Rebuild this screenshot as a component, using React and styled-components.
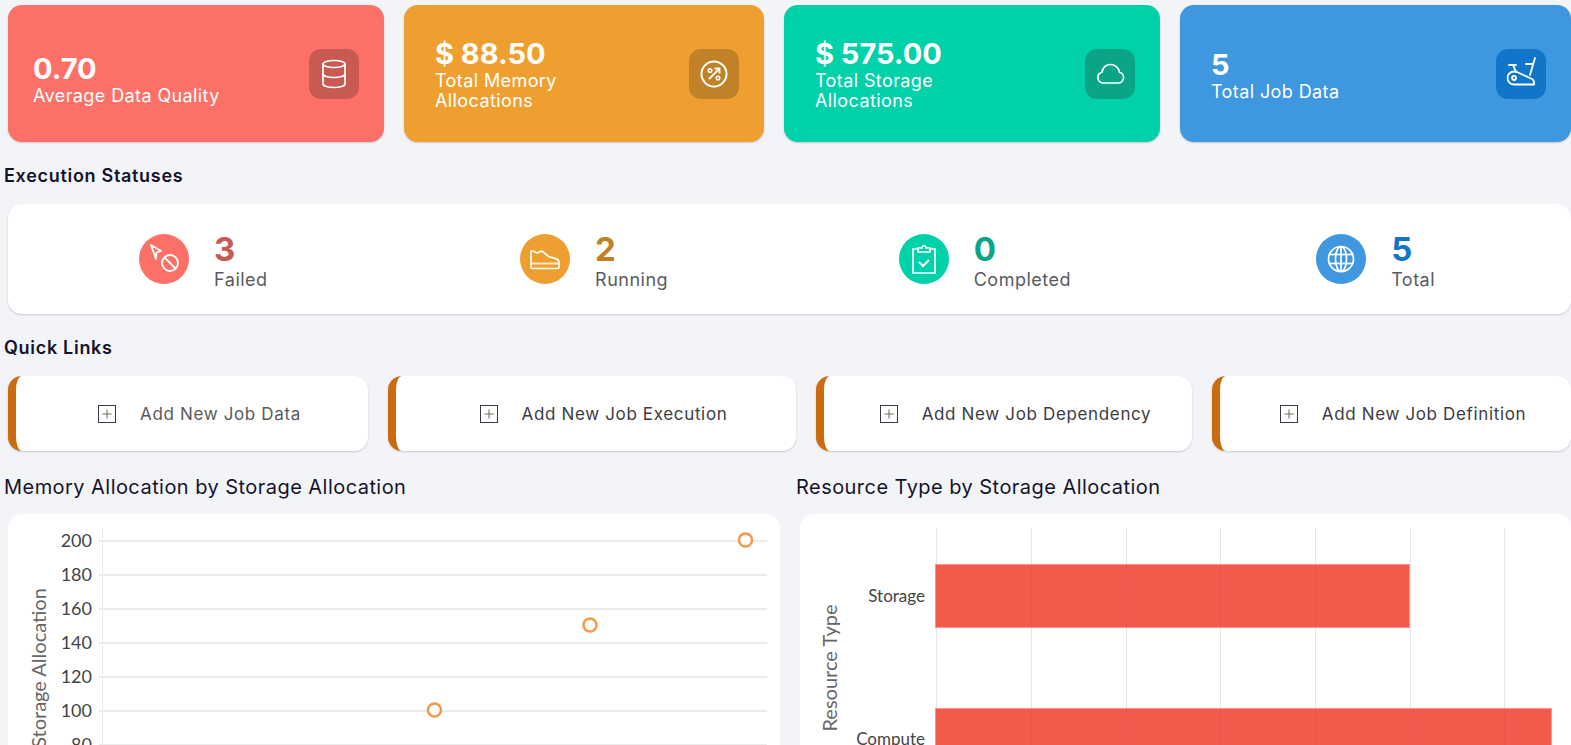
import styled, { createGlobalStyle } from "styled-components";

const GlobalStyle = createGlobalStyle`
  html, body {
    margin: 0;
    height: 745px;
    overflow: hidden;
    background: #f3f4f8;
  }
  * {
    box-sizing: border-box;
  }
`;

const DatabaseIcon = () => (
  <svg width="30" height="30" viewBox="0 0 30 30" fill="none" stroke="#fff" strokeWidth="1.7">
    <ellipse cx="15" cy="5" rx="11" ry="3.500" />
    <path d="M4 5v20c0 2 5 3.500 11 3.500s11-1.500 11-3.500V5" />
    <path d="M4 15c0 2 5 3.500 11 3.500s11-1.500 11-3.500" />
  </svg>
);

const PercentIcon = () => (
  <svg width="30" height="30" viewBox="0 0 30 30" fill="none" stroke="#fff" strokeWidth="2">
    <circle cx="15" cy="15" r="12.500" />
    <path d="M10 20 20 10" strokeWidth="1.800" />
    <path d="M15.500 9.500h5v5" strokeWidth="1.800" />
    <circle cx="11" cy="11.500" r="1.800" strokeWidth="1.500" />
    <circle cx="19" cy="19" r="1.800" strokeWidth="1.500" />
  </svg>
);

const CloudIcon = () => (
  <svg width="30" height="30" viewBox="0 0 30 30" fill="none" stroke="#fff" strokeWidth="1.700">
    <path d="M8 24h15a5.500 5.500 0 0 0 1.500-10.800C24 9 20 5.500 15.500 5.500c-4.500 0-8 3.200-8.500 7.700A5.500 5.500 0 0 0 8 24Z" />
  </svg>
);

const BikeIcon = () => (
  <svg width="34" height="34" viewBox="0 0 34 34" fill="none" stroke="#fff" strokeWidth="1.800" strokeLinecap="round" strokeLinejoin="round">
    <path d="M31 1 26 18" />
    <path d="M22 7h7" />
    <path d="M5 8h7" />
    <path d="M9 8l3 7" />
    <path d="M10 27.500h20c.5-3 0-5-3-6L14 15.500c-1.500-.8-2.800-1-4-1a6.500 6.500 0 0 0 0 13Z" />
    <circle cx="10" cy="21" r="2" />
  </svg>
);

const CursorBlockedIcon = () => (
  <svg width="34" height="34" viewBox="0 0 34 34" fill="none" stroke="#fff" strokeWidth="1.800">
    <path d="M4 3 14 9l-4.500 1.500L9 17 4 3Z" strokeLinejoin="round" />
    <circle cx="23" cy="21" r="8" />
    <path d="M17.500 15.500l11 11" />
  </svg>
);

const ShoeIcon = () => (
  <svg width="32" height="28" viewBox="0 0 32 28" fill="none" stroke="#fff" strokeWidth="1.700" strokeLinejoin="round">
    <path d="M2 6h2l4 2 5-2 6 5c4 2.500 11 2 11 6v5c0 1-.5 1.500-1.500 1.500h-25C2.500 23.500 2 23 2 22V6Z" />
    <path d="M2 18.500h28" strokeOpacity=".75" strokeWidth="2" />
  </svg>
);

const ClipboardIcon = () => (
  <svg width="26" height="30" viewBox="0 0 26 30" fill="none" stroke="#fff" strokeWidth="1.700">
    <path d="M7 5H2v24h22V5h-5" />
    <path d="M7 8V4h4c0-3 4-3 4 0h4v4H7Z" />
    <path d="M8 18l4 4 6-6" strokeWidth="2" />
  </svg>
);

const GlobeIcon = () => (
  <svg width="30" height="30" viewBox="0 0 30 30" fill="none" stroke="#fff" strokeWidth="1.700">
    <circle cx="15" cy="15" r="12.500" />
    <ellipse cx="15" cy="15" rx="5.500" ry="12.500" />
    <path d="M15 2.500v25" />
    <path d="M3 10.500h24" />
    <path d="M3 19.500h24" />
  </svg>
);

const PlusBoxIcon = () => (
  <svg width="18" height="18" viewBox="0 0 18 18" fill="none">
    <rect x=".5" y=".5" width="17" height="17" stroke="#3a3a4a" />
    <path d="M9 4.500v9M4.500 9h9" stroke="#666" />
  </svg>
);

const summaryCards = [
  { value: "0.70", label: "Average Data Quality", bg: "#fd7067", tile: "#c85a52", icon: <DatabaseIcon />, pad: 25, shift: 12 },
  { value: "$ 88.50", label: "Total Memory\nAllocations", bg: "#ef9f30", tile: "#c08127", icon: <PercentIcon />, pad: 31, shift: 2 },
  { value: "$ 575.00", label: "Total Storage\nAllocations", bg: "#00d1a9", tile: "#0aa586", icon: <CloudIcon />, pad: 31, shift: 2 },
  { value: "5", label: "Total Job Data", bg: "#3f97df", tile: "#1176ca", icon: <BikeIcon />, pad: 31, shift: 4 },
];

const statuses = [
  { value: "3", label: "Failed", bg: "#fd7067", color: "#c85a52", icon: <CursorBlockedIcon /> },
  { value: "2", label: "Running", bg: "#ef9f30", color: "#c08127", icon: <ShoeIcon /> },
  { value: "0", label: "Completed", bg: "#00d1a9", color: "#0aa586", icon: <ClipboardIcon /> },
  { value: "5", label: "Total", bg: "#3f97df", color: "#1176ca", icon: <GlobeIcon /> },
];

const quickLinks = [
  { label: "Add New Job Data", color: "#5a5a5a" },
  { label: "Add New Job Execution", color: "#3c3c44" },
  { label: "Add New Job Dependency", color: "#3c3c44" },
  { label: "Add New Job Definition", color: "#3c3c44" },
];

const scatterTicks = [200, 180, 160, 140, 120, 100, 80];
const scatterPoints = [
  [426.5, 196],
  [582, 111],
  [737.5, 26],
];
const barGrid = [136, 231, 326, 420, 515, 610, 704];

const ScatterChart = () => (
  <svg width="772" height="240" viewBox="0 0 772 240">
    <text x="33" y="154" transform="rotate(-90 33 154)" textAnchor="middle" dominantBaseline="middle" fontFamily="Lato" fontSize="20" fill="#666">
      Storage Allocation
    </text>
    {scatterTicks.map((tick, i) => (
      <g key={tick}>
        <path d={`M91 ${27 + i * 34}H759`} stroke="#ebebeb" strokeWidth="2" />
        <text x="84" y={33 + i * 34} textAnchor="end" fontFamily="Lato" fontSize="18" fill="#444">
          {tick}
        </text>
      </g>
    ))}
    <path d="M94.500 14V240" stroke="#ebebeb" />
    {scatterPoints.map(([x, y]) => (
      <circle key={x} cx={x} cy={y} r="6.500" fill="#fff" stroke="#f4994a" strokeWidth="2.500" />
    ))}
  </svg>
);

const BarChart = () => (
  <svg width="771" height="240" viewBox="0 0 771 240">
    <text x="32" y="154" transform="rotate(-90 32 154)" textAnchor="middle" dominantBaseline="middle" fontFamily="Lato" fontSize="20" fill="#666">
      Resource Type
    </text>
    {barGrid.map((x) => (
      <path key={x} d={`M${x + 0.5} 14V240`} stroke="#e6e6e6" />
    ))}
    <rect x="135.500" y="50.500" width="474" height="63" fill="#f25b4c" stroke="#f9958b" />
    <rect x="135.500" y="194.500" width="616" height="60" fill="#f25b4c" stroke="#f9958b" />
    <path d="M231.500 50V114M326.500 50V114M420.500 50V114M515.500 50V114M231.500 194V240M326.500 194V240M420.500 194V240M515.500 194V240M610.500 194V240M704.500 194V240" stroke="#000" strokeOpacity=".03" />
    <text x="125" y="88" textAnchor="end" fontFamily="Lato" fontSize="17" fill="#444">
      Storage
    </text>
    <text x="125" y="231" textAnchor="end" fontFamily="Lato" fontSize="17" fill="#444">
      Compute
    </text>
  </svg>
);

const App = () => {
  return (
    <Page>
      <GlobalStyle />
      <SummaryRow>
        {summaryCards.map((card) => (
          <SummaryCard key={card.value} $bg={card.bg} $pad={card.pad}>
            <SummaryText $shift={card.shift}>
              <SummaryValue>{card.value}</SummaryValue>
              <SummaryLabel>{card.label}</SummaryLabel>
            </SummaryText>
            <IconTile $bg={card.tile}>{card.icon}</IconTile>
          </SummaryCard>
        ))}
      </SummaryRow>

      <SectionTitle>Execution Statuses</SectionTitle>
      <StatusPanel>
        {statuses.map((status) => (
          <StatusItem key={status.label}>
            <StatusBadge $bg={status.bg}>{status.icon}</StatusBadge>
            <StatusText>
              <StatusValue $color={status.color}>{status.value}</StatusValue>
              <StatusLabel>{status.label}</StatusLabel>
            </StatusText>
          </StatusItem>
        ))}
      </StatusPanel>

      <SectionTitle>Quick Links</SectionTitle>
      <LinksRow>
        {quickLinks.map((link) => (
          <LinkCard key={link.label} $color={link.color}>
            <PlusBoxIcon />
            {link.label}
          </LinkCard>
        ))}
      </LinksRow>

      <ChartsRow>
        <div>
          <ChartTitle>Memory Allocation by Storage Allocation</ChartTitle>
          <ChartCard>
            <ScatterChart />
          </ChartCard>
        </div>
        <div>
          <ChartTitle>Resource Type by Storage Allocation</ChartTitle>
          <ChartCard>
            <BarChart />
          </ChartCard>
        </div>
      </ChartsRow>
    </Page>
  );
};

const Page = styled.main`
  width: 1571px;
  height: 745px;
  overflow: hidden;
  padding: 5px 0 0 4px;
  background: #f3f4f8;
  font-family: "Inter", "Liberation Sans", sans-serif;
`;

const SummaryRow = styled.section`
  display: grid;
  grid-template-columns: 376px 360px 376px 391px;
  gap: 20px;
  margin-left: 4px;
`;

const SummaryCard = styled.div`
  display: flex;
  align-items: center;
  justify-content: space-between;
  height: 137px;
  padding: 0 25px 0 ${(p) => p.$pad}px;
  border-radius: 14px;
  background: ${(p) => p.$bg};
  box-shadow: 0 1px 2px rgba(40, 40, 60, 0.2);
  color: #fff;
`;

const SummaryText = styled.div`
  padding-top: ${(p) => p.$shift}px;
`;

const SummaryValue = styled.div`
  font-size: 29px;
  font-weight: 700;
  line-height: 30px;
`;

const SummaryLabel = styled.div`
  margin-top: 2px;
  font-size: 18px;
  font-weight: 400;
  letter-spacing: 0.4px;
  line-height: 20px;
  white-space: pre-line;
`;

const IconTile = styled.div`
  display: flex;
  align-items: center;
  justify-content: center;
  width: 50px;
  height: 50px;
  border-radius: 12px;
  background: ${(p) => p.$bg};
`;

const SectionTitle = styled.h2`
  margin: 22px 0 16px;
  font-size: 18px;
  font-weight: 600;
  letter-spacing: 0.7px;
  line-height: 24px;
  color: #15132b;
`;

const StatusPanel = styled.section`
  display: grid;
  grid-template-columns: repeat(4, 1fr);
  height: 110px;
  margin-left: 4px;
  border-radius: 14px;
  background: #fff;
  box-shadow: 0 1px 2px rgba(40, 40, 60, 0.2);
`;

const StatusItem = styled.div`
  display: flex;
  align-items: center;
  justify-content: center;
  gap: 25px;
`;

const StatusBadge = styled.div`
  display: flex;
  align-items: center;
  justify-content: center;
  width: 50px;
  height: 50px;
  border-radius: 50%;
  background: ${(p) => p.$bg};
`;

const StatusText = styled.div`
  padding-top: 6px;
`;

const StatusValue = styled.div`
  font-size: 33px;
  font-weight: 700;
  line-height: 34px;
  color: ${(p) => p.$color};
`;

const StatusLabel = styled.div`
  margin-top: 2px;
  font-size: 18px;
  letter-spacing: 0.5px;
  line-height: 24px;
  color: #5a5a62;
`;

const LinksRow = styled.section`
  display: grid;
  grid-template-columns: 360px 408px 376px 359px;
  gap: 20px;
  margin-left: 4px;
`;

const LinkCard = styled.div`
  display: flex;
  align-items: center;
  justify-content: center;
  gap: 24px;
  height: 75px;
  padding-left: 15px;
  border-left: 8px solid #cc6a10;
  border-radius: 14px;
  background: #fff;
  box-shadow: 0 1px 2px rgba(40, 40, 60, 0.2);
  font-size: 17px;
  letter-spacing: 0.65px;
  color: ${(p) => p.$color};
`;

const ChartsRow = styled.section`
  display: grid;
  grid-template-columns: 772px 771px;
  gap: 20px;
  margin-left: 4px;
`;

const ChartTitle = styled.h3`
  margin: 22px 0 13px -4px;
  font-size: 20px;
  font-weight: 400;
  letter-spacing: 0.45px;
  line-height: 28px;
  color: #15132b;
`;

const ChartCard = styled.div`
  height: 300px;
  border-radius: 14px;
  background: #fff;
`;

export default App;
